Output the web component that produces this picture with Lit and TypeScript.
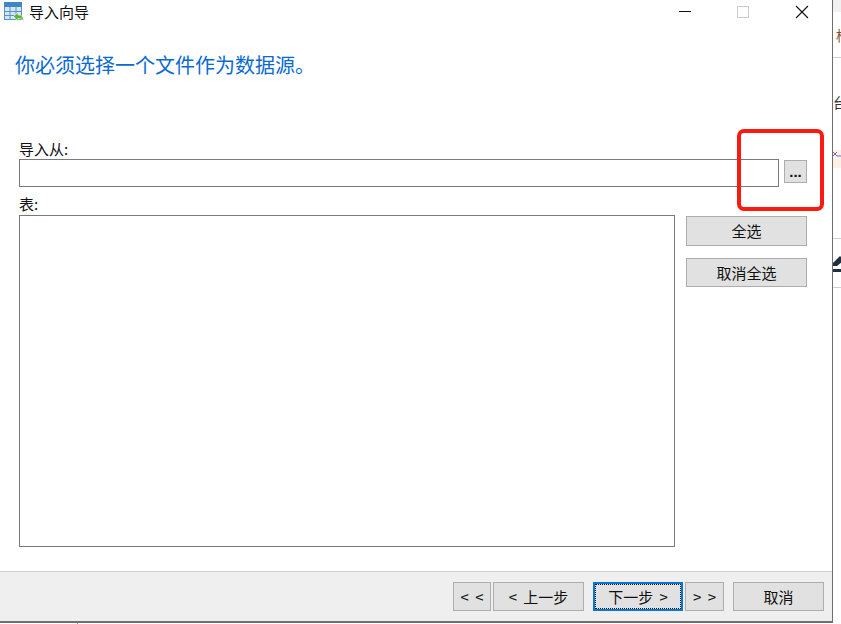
import { LitElement, html, css, svg } from 'lit';
import { customElement } from 'lit/decorators.js';

const tableIcon = svg`
  <rect x="0.5" y="0.5" width="17" height="17" fill="#d6e6f4" stroke="#5b93c7"/>
  <rect x="0" y="0" width="18" height="5" fill="#3f86c4"/>
  <path d="M6 5v13M12 5v13M0 9.5h18M0 13.5h18" stroke="#5b93c7" stroke-width="1" fill="none"/>
  <path d="M9.5 14.5 14 10.5v2.4c3.6 0 5.6 2 6 6.6-1.2-2.2-3-3-6-3v2.4z" fill="#5cb531" stroke="#fff" stroke-width="0.6"/>
`;

@customElement('app-root')
export class AppRoot extends LitElement {
  static styles = css`
    :host {
      display: block;
      width: 841px;
      height: 624px;
      overflow: hidden;
      position: relative;
      background: #fff;
      font-family: 'Noto Sans CJK SC', 'Liberation Sans', sans-serif;
      color: #111;
    }
    .desktop {
      display: flex;
      height: 624px;
    }
    .window {
      box-sizing: border-box;
      width: 833px;
      height: 623px;
      flex: none;
      display: flex;
      flex-direction: column;
      background: #fff;
      border-right: 1px solid #6e6e6e;
      border-bottom: 2px solid #6e6e6e;
    }
    .titlebar {
      display: flex;
      align-items: flex-start;
      height: 24px;
      flex: none;
      padding: 2px 2px 0 4px;
      box-sizing: border-box;
    }
    .titlebar svg.app {
      width: 21px;
      height: 20px;
      flex: none;
    }
    .title {
      margin-left: 4px;
      font-size: 15px;
      line-height: 20px;
      flex: 1;
    }
    .ctl {
      width: 58px;
      height: 20px;
      flex: none;
      display: block;
    }
    h1 {
      margin: 26px 0 0 15px;
      font-size: 20px;
      line-height: 30px;
      font-weight: 400;
      color: #0a6ad2;
      flex: none;
    }
    .body {
      flex: 1;
      display: grid;
      grid-template-columns: 656px 11px 121px;
      grid-template-rows: 20px 28px 10px 18px 332px;
      margin: 59px 0 0 19px;
      align-content: start;
    }
    .label {
      font-size: 15px;
      line-height: 20px;
      grid-column: 1 / -1;
      height: 20px;
    }
    .label.tbl {
      grid-row: 4;
      line-height: 14px;
    }
    .path-row {
      grid-column: 1 / -1;
      grid-row: 2;
      display: flex;
      align-items: flex-start;
    }
    .input {
      box-sizing: border-box;
      width: 760px;
      height: 28px;
      border: 1px solid #7a7a7a;
      background: #fff;
    }
    .list {
      grid-column: 1;
      grid-row: 5;
      box-sizing: border-box;
      border: 1px solid #7a7a7a;
      background: #fff;
    }
    .side {
      grid-column: 3;
      grid-row: 5;
      display: flex;
      flex-direction: column;
      gap: 12px;
      padding-top: 1px;
    }
    button {
      box-sizing: border-box;
      font: inherit;
      font-size: 15px;
      color: #111;
      background: #e1e1e1;
      border: 1px solid #adadad;
      padding: 0;
      margin: 0;
      height: 29px;
      display: flex;
      align-items: center;
      justify-content: center;
      white-space: pre;
    }
    .side button {
      width: 121px;
      height: 29.5px;
    }
    .browse {
      width: 23px;
      height: 23px;
      margin: 1px 0 0 5px;
      font-family: 'Liberation Sans', sans-serif;
      font-size: 15px;
      font-weight: 700;
      line-height: 14px;
    }
    .wide {
      word-spacing: 3px;
    }
    .footer {
      flex: none;
      height: 50px;
      box-sizing: border-box;
      background: #efefef;
      border-top: 1px solid #d2d2d2;
      display: flex;
      align-items: flex-start;
      padding: 10px 8px 0 453px;
    }
    .nav-back-all { width: 38px; }
    .nav-back { width: 91px; margin-left: 2px; }
    .nav-next {
      width: 90px;
      margin-left: 9px;
      border: 2px solid #0078d7;
      outline: 1px dotted #111;
      outline-offset: -3px;
    }
    .nav-next-all { width: 39px; margin-left: 2px; }
    .cancel { width: 91px; margin-left: 9px; }
    .strip {
      position: relative;
      flex: 1;
      height: 623px;
      overflow: hidden;
      font-size: 14px;
    }
    .strip .top { height: 12px; background: #f1f1f1; }
    .strip .glyph {
      position: absolute;
      white-space: nowrap;
      line-height: 16px;
    }
    .strip .g1 { left: 3px; top: 27px; color: #8a4a2a; }
    .strip .g2 { left: 0; top: 94px; color: #333; }
    .strip .tint {
      position: absolute;
      left: 0;
      right: 0;
      top: 150px;
      height: 18px;
      background: #fdf1e7;
    }
    .strip .mark {
      position: absolute;
      left: 0;
      top: 152px;
      width: 8px;
      height: 5px;
      display: block;
    }
    .strip .rule {
      position: absolute;
      left: 0;
      right: 0;
      height: 1px;
      background: #d0d0d0;
    }
    .strip .pen {
      position: absolute;
      left: 0;
      top: 254px;
      width: 9px;
      height: 20px;
      display: block;
    }
    .tick {
      position: absolute;
      left: 77px;
      top: 623px;
      width: 1px;
      height: 1px;
      background: #a0a0a0;
    }
    .callout {
      position: absolute;
      left: 737px;
      top: 129px;
      width: 87px;
      height: 82px;
      box-sizing: border-box;
      border: 4px solid #fb1a10;
      border-radius: 7px;
      pointer-events: none;
    }
  `;

  render() {
    return html`
      <div class="desktop">
        <div class="window">
          <div class="titlebar">
            <svg class="app" viewBox="0 0 21 20">${tableIcon}</svg>
            <div class="title">导入向导</div>
            <svg class="ctl" viewBox="0 0 58 20">
              <path d="M23 9.5h12" stroke="#111" stroke-width="1" />
            </svg>
            <svg class="ctl" viewBox="0 0 58 20">
              <rect x="23.5" y="4.5" width="11" height="11" fill="none" stroke="#ccc" />
            </svg>
            <svg class="ctl" viewBox="0 0 58 20">
              <path d="M24 4l12 12M36 4l-12 12" stroke="#111" stroke-width="1.1" fill="none" />
            </svg>
          </div>
          <h1>你必须选择一个文件作为数据源。</h1>
          <div class="body">
            <div class="label">导入从:</div>
            <div class="path-row">
              <div class="input"></div>
              <button class="browse">...</button>
            </div>
            <div class="label tbl">表:</div>
            <div class="list"></div>
            <div class="side">
              <button>全选</button>
              <button>取消全选</button>
            </div>
          </div>
          <div class="footer">
            <button class="nav-back-all wide">&lt; &lt;</button>
            <button class="nav-back wide">&lt; 上一步</button>
            <button class="nav-next wide">下一步 &gt;</button>
            <button class="nav-next-all wide">&gt; &gt;</button>
            <button class="cancel">取消</button>
          </div>
        </div>
        <div class="strip">
          <div class="top"></div>
          <span class="glyph g1">框</span>
          <div class="rule" style="top:57px"></div>
          <span class="glyph g2">台</span>
          <div class="tint"></div>
          <svg class="mark" viewBox="0 0 8 5">
            <path d="M0 0l4 4M4 0L0 4M4 4h4" stroke="#6a6ac8" fill="none" />
          </svg>
          <div class="rule" style="top:238px"></div>
          <svg class="pen" viewBox="0 0 9 20">
            <path d="M0 9 7 2l2 2v4L4 12H0z" fill="#1f2f40" />
            <rect x="0" y="15" width="9" height="3" fill="#1f2f40" />
          </svg>
          <div class="rule" style="top:287px"></div>
        </div>
      </div>
      <div class="tick"></div>
      <div class="callout"></div>
    `;
  }
}
